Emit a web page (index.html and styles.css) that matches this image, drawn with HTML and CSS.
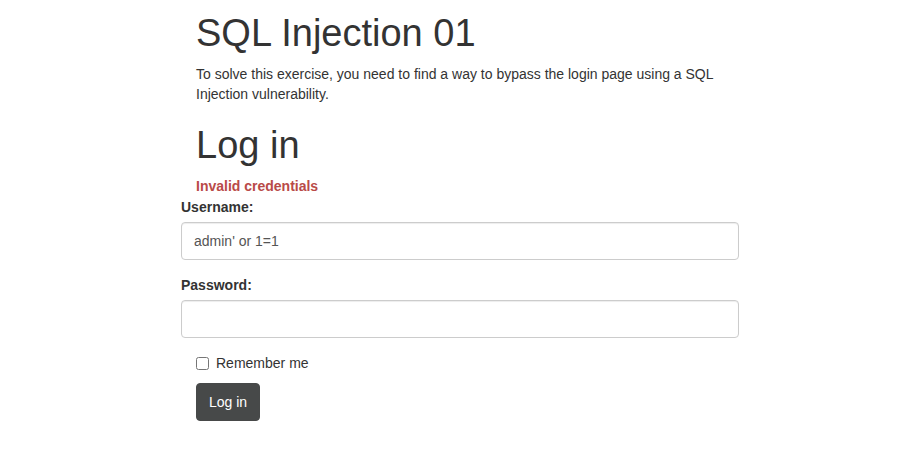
FILE: index.html
```html
<!DOCTYPE html>
<html lang="en">
<head>
<meta charset="utf-8">
<title>SQL Injection 01</title>
<link rel="stylesheet" href="styles.css">
</head>
<body>
<div class="page">
  <div class="intro">
    <h1 class="title">SQL Injection 01</h1>
    <p class="lead-text">To solve this exercise, you need to find a way to bypass the login page using a SQL Injection vulnerability.</p>
    <h1 class="title title-login">Log in</h1>
    <div class="validation">Invalid credentials</div>
  </div>
  <form class="login-form">
    <div class="form-group">
      <label class="field-label" for="username">Username:</label>
      <input class="form-control" id="username" type="text" value="admin' or 1=1">
    </div>
    <div class="form-group">
      <label class="field-label" for="password">Password:</label>
      <input class="form-control" id="password" type="password">
    </div>
    <div class="checkbox-row">
      <input class="check" id="remember" type="checkbox">
      <label class="check-label" for="remember">Remember me</label>
    </div>
    <div class="actions">
      <button class="btn" type="button">Log in</button>
    </div>
  </form>
</div>
</body>
</html>
```
FILE: styles.css
```css
* { box-sizing: border-box; }
html, body { margin: 0; padding: 0; background: #fff; }
body {
  font-family: "Liberation Sans", Arial, Helvetica, sans-serif;
  font-size: 14px;
  line-height: 20px;
  color: #333;
}
.page {
  width: 558px;
  margin-left: 181px;
  padding-top: 12px;
}
.intro { padding-left: 15px; }
.title {
  font-size: 38px;
  font-weight: 400;
  line-height: 42px;
  margin: 0 0 10px 0;
  color: #333;
}
.title-login { margin-top: 20px; }
.lead-text { margin: 0; }
.validation {
  color: #b94a48;
  font-weight: 700;
  margin-bottom: 1px;
}
.login-form { margin: 0; }
.form-group { margin-bottom: 15px; }
.field-label {
  display: inline-block;
  font-weight: 700;
  margin-bottom: 5px;
}
.form-control {
  display: block;
  width: 100%;
  height: 38px;
  padding: 8px 12px;
  font-family: inherit;
  font-size: 14px;
  line-height: 20px;
  color: #555;
  background: #fff;
  border: 1px solid #ccc;
  border-radius: 4px;
  box-shadow: inset 0 1px 1px rgba(0,0,0,0.075);
  outline: none;
}
.checkbox-row {
  display: flex;
  align-items: center;
  padding-left: 15px;
  height: 20px;
  margin-bottom: 10px;
}
.check {
  width: 13px;
  height: 13px;
  margin: 0 7px 0 0;
}
.check-label { font-weight: 400; }
.actions { padding-left: 15px; }
.btn {
  display: inline-block;
  height: 38px;
  padding: 8px 12px;
  font-family: inherit;
  font-size: 14px;
  line-height: 20px;
  color: #fff;
  background: #474949;
  border: 1px solid #474949;
  border-radius: 4px;
  cursor: pointer;
}
```
